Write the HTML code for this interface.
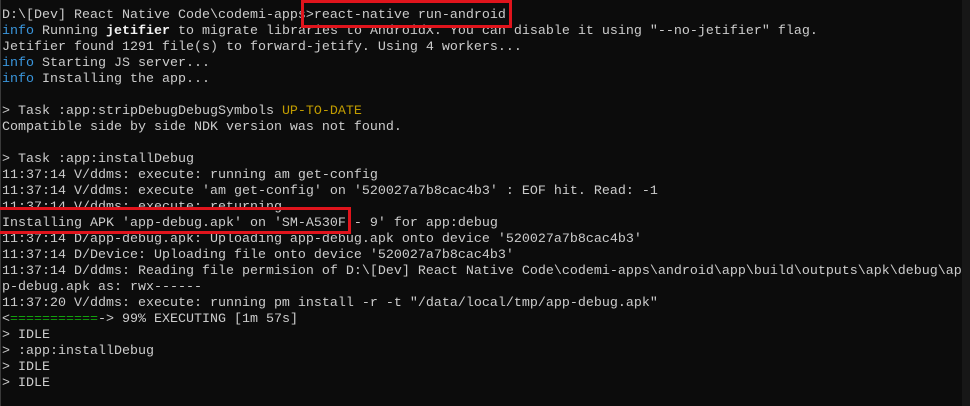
<!DOCTYPE html>
<html><head><meta charset="utf-8"><style>
html,body{margin:0;padding:0;width:970px;height:406px;overflow:hidden;background:#0c0c0c}
pre{position:absolute;left:2px;top:8px;margin:0;font-family:"Liberation Mono",monospace;font-size:13.33px;line-height:16px;color:#cccccc;white-space:pre}
.c{color:#3a96dd}.y{color:#c19c00}.g{color:#13a10e}.b{color:#f2f2f2;font-weight:bold}
.sb{position:absolute;left:962px;top:0;width:8px;height:406px;background:#171717}
.lb{position:absolute;left:0;top:0;width:1px;height:406px;background:#3a3a3a}
.box{position:absolute;border:3px solid #e0141c}
</style></head><body>
<div class="lb"></div>
<pre>D:\[Dev] React Native Code\codemi-apps&gt;react-native run-android
<span class="c">info</span> Running <span class="b">jetifier</span> to migrate libraries to AndroidX. You can disable it using "--no-jetifier" flag.
Jetifier found 1291 file(s) to forward-jetify. Using 4 workers...
<span class="c">info</span> Starting JS server...
<span class="c">info</span> Installing the app...

&gt; Task :app:stripDebugDebugSymbols <span class="y">UP-TO-DATE</span>
Compatible side by side NDK version was not found.

&gt; Task :app:installDebug
11:37:14 V/ddms: execute: running am get-config
11:37:14 V/ddms: execute 'am get-config' on '520027a7b8cac4b3' : EOF hit. Read: -1
11:37:14 V/ddms: execute: returning
Installing APK 'app-debug.apk' on 'SM-A530F - 9' for app:debug
11:37:14 D/app-debug.apk: Uploading app-debug.apk onto device '520027a7b8cac4b3'
11:37:14 D/Device: Uploading file onto device '520027a7b8cac4b3'
11:37:14 D/ddms: Reading file permision of D:\[Dev] React Native Code\codemi-apps\android\app\build\outputs\apk\debug\ap
p-debug.apk as: rwx------
11:37:20 V/ddms: execute: running pm install -r -t "/data/local/tmp/app-debug.apk"
&lt;<span class="g">===========</span>-&gt; 99% EXECUTING [1m 57s]
&gt; IDLE
&gt; :app:installDebug
&gt; IDLE
&gt; IDLE</pre>
<div class="box" style="left:301px;top:0px;width:205px;height:22px"></div>
<div class="box" style="left:-3px;top:207px;width:348px;height:21px"></div>
<div class="sb"></div>
</body></html>
